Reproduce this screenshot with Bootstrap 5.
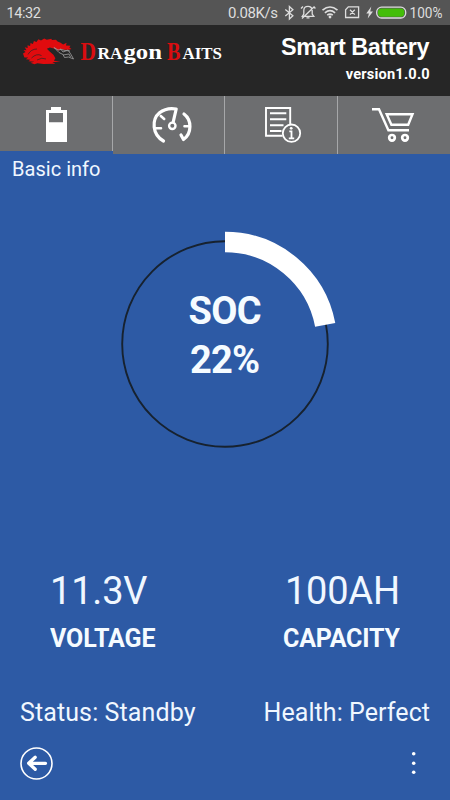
<!DOCTYPE html>
<html lang="en">
<head>
<meta charset="utf-8">
<meta name="viewport" content="width=device-width, initial-scale=1">
<title>Smart Battery</title>
<link href="https://cdn.jsdelivr.net/npm/bootstrap@5.3.0/dist/css/bootstrap.min.css" rel="stylesheet">
<style>
body{font-family:Roboto,"Liberation Sans",sans-serif;background:#2d5aa5;width:450px;height:800px;overflow:hidden}
.statusbar{height:25px;background:#555;color:#dedede}
.appbar{height:71px;background:#262626}
.tabs{height:58px}
.tab-item{height:58px;background:#6d6e70;border-right:1.5px solid #a6a7a9}
.tab-item:last-child{border-right:0}
.tab-item.active{height:55px}
.section-title{font-size:20px;line-height:24px;padding:3px 12px 0}
.gauge{margin-top:50px}
.reading{font-size:38px;line-height:44px}
.label{font-size:25px;line-height:30px;margin-top:11px}
.readings{margin-top:111px;padding:0 50px}
.state{font-size:25px;line-height:30px;margin-top:44px;padding:0 20px}
.bottom{margin-top:19px;padding:0 20px}
</style>
</head>
<body class="d-flex flex-column text-white">
<div class="statusbar">
<svg class="d-block" width="450" height="25" fill="none" stroke="#dedede" stroke-width="1.3">
 <g fill="#dedede" stroke="none" font-family="Roboto, sans-serif" font-size="15">
  <text x="6.5" y="18" font-size="14.500" textLength="34.500">14:32</text>
  <text x="228" y="18" textLength="50">0.08K/s</text>
  <text x="409.5" y="18" textLength="33" lengthAdjust="spacingAndGlyphs">100%</text>
 </g>
 <path d="M285.3 9.4l7.6 6.3-3.5 3.2V6.6l3.5 3.2-7.6 6.3"/>
 <path d="M302.3 16.4h11.5l-1.6-2.3v-3.6c0-5.4-8.4-5.4-8.4 0v3.6zM306.5 17.8h3M302 18.5L314.5 6.5M301 8.5l2-2M313.6 6.5l1.8 2"/>
 <path d="M322.5 10.2q7.5-6.4 15 0M324.9 12.8q5.1-4.4 10.2 0M327.2 15.2q2.8-2.3 5.6 0" stroke-width="1.6"/><circle cx="330" cy="17" r="1.4" fill="#dedede" stroke="none"/>
 <path d="M348.3 6.8H358.6V17.5H345.6V9.8zM350 9.8l4.8 4.8M354.8 9.8l-4.8 4.8"/>
 <path d="M371.3 6.5l-5 7h2.6l-1.2 5 5.3-7h-2.8z" fill="#dedede" stroke="none"/>
 <rect x="376.7" y="7.2" width="29" height="10.8" rx="4.8"/><rect x="378" y="8.5" width="26.4" height="8.2" rx="3.6" fill="#43bd08" stroke="none"/>
</svg>
</div>
<header class="appbar">
<svg class="d-block" width="450" height="71" viewBox="0 25 450 71">
 <path fill="#e00b0e" d="M23 53.500l2.500-1.500-2-2 3 .3-1.800-3 3 .7-.2-2.700 2.600.6.400-2.800 2.400.8 1-3 2.500 1 2-2.700 2.600 1.200 3.200-2 2.600 1.300 4.500-1 .7 1.400 4-.3 1.600 1.800 3 1.200 2.500 1.800 3.500-1.800-.6 2.800 4.500.2-1.200 1.800 2.200 1.400-2.800.8-4.500 0-3.800-.8-1.500 1.800-3.200-1.800-5.800-1.500-3 1.300 3 3 3.500 3 2 3.500-1.500 2.500 6.500.6-8 .8 3 1.500-12 .2-6-.6-3 1-4-1.500 4-1-6-.5 2-1.500-4.500-.5 2.300-1.700-3.800-.2z"/>
 <path d="M28 54.500q3-5.500 9-5.500M31.500 58q5-5 10-2.500M37 60q5-3 9-1" stroke="#262626" stroke-width=".7" fill="none"/>
 <path d="M54 47.500l4 2.500 3-.5 2 2.500 5-2 3 4.500 2.500 4.500-5-2-4 .5-1.500-3-4-2zM60 49l5 1.500 5 .5M63 55l6-1 1.500 3" fill="none" stroke="#a0a0a0" stroke-width=".8"/>
 <g font-family="'Liberation Serif', serif" font-weight="bold" fill="#fff">
  <text x="80.5" y="59.8" font-size="26" fill="#d90d10" textLength="15.500" lengthAdjust="spacingAndGlyphs">D</text>
  <text x="97.5" y="59.2" font-size="16.500" textLength="25" lengthAdjust="spacingAndGlyphs">RA</text>
  <text x="123.500" y="59.2" font-size="21" textLength="38.500" lengthAdjust="spacingAndGlyphs">gon</text>
  <text x="167" y="59.8" font-size="26" fill="#d90d10" textLength="13.500" lengthAdjust="spacingAndGlyphs">B</text>
  <text x="182.500" y="59.2" font-size="16.500" textLength="39.500" lengthAdjust="spacingAndGlyphs">AITS</text>
 </g>
 <g fill="#fff" font-weight="bold">
  <text x="281" y="54.7" font-family="'Liberation Sans', sans-serif" font-size="23.4" textLength="148.5">Smart Battery</text>
  <text x="345.7" y="79" font-size="14.6" textLength="84">version1.0.0</text>
 </g>
</svg>
</header>
<nav class="tabs row g-0 align-items-start">
 <a class="col tab-item active"><svg class="d-block" width="111" height="55" viewBox="0 96 111 55"><path d="M51 107h10v3h6v32H46v-32h5zM49 113v9.3h14V113z" fill="#fff" fill-rule="evenodd"/></svg></a>
 <a class="col tab-item"><svg class="d-block" width="111" height="58" viewBox="112.5 96 111 58" fill="none" stroke="#fff" stroke-width="3.200" stroke-linecap="round" stroke-linejoin="round"><path d="M163 141C151.500 134.500 151 119.500 159 112.800Q166 107.300 175.700 109L172.700 122M183.500 114C191.500 120 191.500 133.500 183 139.500L180.500 135"/><path d="M160.300 116l3.400 2.900M155.500 128.200h5M184 126.300h5" stroke-width="2.600"/><circle cx="171.800" cy="125.800" r="3.200" stroke-width="2.400"/></svg></a>
 <a class="col tab-item"><svg class="d-block" width="111" height="58" viewBox="225 96 111 58" fill="none" stroke="#fff" stroke-width="1.900"><path d="M282.500 135.700H266V108h24.200v16M270 113.200h16.300M270 119.200h16.300M270 125.200h13.500M270 131h11.500"/><circle cx="291.500" cy="133.200" r="8.700" stroke-width="1.800"/><path d="M289.300 131.300h2.200v6.700M288.800 138.300h5.400" stroke-width="1.800"/><circle cx="291.200" cy="128.300" r="1.400" fill="#fff" stroke="none"/></svg></a>
 <a class="col tab-item"><svg class="d-block" width="112" height="58" viewBox="338 96 112 58" fill="none" stroke="#fff" stroke-width="2.400"><path d="M372 109.200h7l9.400 21h20.600M386.700 114.200h25.800l-4.300 10.600h-16.800z"/><circle cx="392" cy="137.800" r="2.800" stroke-width="2.700"/><circle cx="405" cy="137.800" r="2.800" stroke-width="2.700"/></svg></a>
</nav>
<main>
 <div class="section-title"><svg class="d-block overflow-visible" width="100" height="24"><text x="0" y="19" fill="#f0f7ff" font-size="20" textLength="88.500">Basic info</text></svg></div>
 <div class="gauge">
 <svg class="d-block mx-auto" width="226" height="226" viewBox="112 231 226 226">
  <circle cx="225" cy="344" r="102.800" fill="none" stroke="#17222f" stroke-width="1.900"/>
  <circle cx="225" cy="344" r="102" fill="none" stroke="#fff" stroke-width="20.500" pathLength="100" stroke-dasharray="22 78" transform="rotate(-90 225 344)"/>
  <g fill="#f5fbff" font-weight="bold" font-size="38"><text x="188.500" y="324" textLength="73">SOC</text><text x="190" y="373.300" textLength="70">22%</text></g>
 </svg>
 </div>
 <div class="readings d-flex justify-content-between">
  <div><div class="reading"><svg class="d-block overflow-visible" width="106" height="44"><text x="0" y="35.500" fill="#f0f7ff" font-size="38" textLength="97.500">11.3V</text></svg></div>
  <div class="label fw-bold"><svg class="d-block" width="106" height="30"><text x="0" y="23.500" fill="#f5fbff" textLength="105.500">VOLTAGE</text></svg></div></div>
  <div><div class="reading"><svg class="d-block overflow-visible" width="117" height="44"><text x="2" y="35.500" fill="#f0f7ff" font-size="38" textLength="115">100AH</text></svg></div>
  <div class="label fw-bold"><svg class="d-block" width="117" height="30"><text x="0" y="23.500" fill="#f5fbff" textLength="117">CAPACITY</text></svg></div></div>
 </div>
 <div class="state d-flex justify-content-between">
  <svg class="d-block" width="176" height="30"><text x="0" y="23.500" fill="#f0f7ff" textLength="175.500">Status: Standby</text></svg>
  <svg class="d-block" width="167" height="30"><text x="0.500" y="23.500" fill="#f0f7ff" textLength="166.500">Health: Perfect</text></svg>
 </div>
 <div class="bottom d-flex justify-content-between">
  <svg width="34" height="35" viewBox="19.500 746 34 35" fill="none" stroke="#fff"><circle cx="36" cy="763.500" r="15.500" stroke-width="1.600"/><path d="M45 763.300H28.500M34.700 757.300l-6.500 6 6.500 6" stroke-width="3.300" stroke-linecap="round" stroke-linejoin="round"/></svg>
  <svg width="33" height="35" viewBox="397 746 33 35" fill="#fff"><circle cx="413.700" cy="753.700" r="1.800"/><circle cx="413.700" cy="763.200" r="1.800"/><circle cx="413.700" cy="772.200" r="1.800"/></svg>
 </div>
</main>
<script src="https://cdn.jsdelivr.net/npm/bootstrap@5.3.0/dist/js/bootstrap.bundle.min.js"></script>
</body>
</html>
